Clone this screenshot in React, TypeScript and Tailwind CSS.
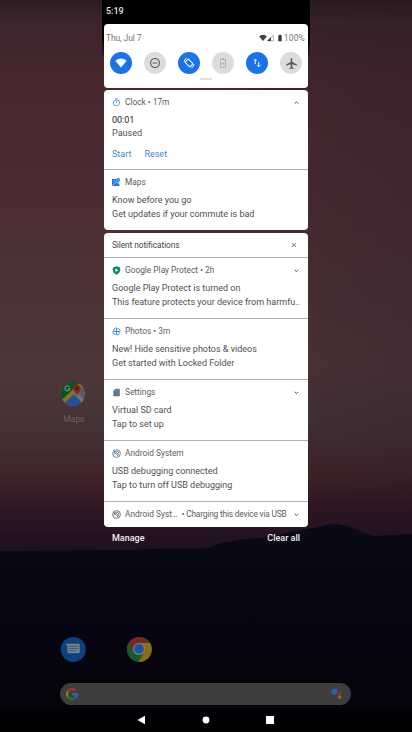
import type { ReactNode } from "react";
import {
  MdAirplanemodeActive,
  MdBatteryStd,
  MdClose,
  MdOutlineTimer,
  MdRemoveCircleOutline,
} from "react-icons/md";

function Wallpaper() {
  return (
    <svg className="absolute inset-0" width="412" height="732" viewBox="0 0 412 732">
      <defs>
        <linearGradient id="sky" x1="0" y1="0" x2="0" y2="1">
          <stop offset="0" stopColor="#2b1c20" />
          <stop offset="0.04" stopColor="#3b252b" />
          <stop offset="0.15" stopColor="#47282e" />
          <stop offset="0.45" stopColor="#4b3034" />
          <stop offset="0.66" stopColor="#4d3739" />
          <stop offset="0.78" stopColor="#443134" />
          <stop offset="0.85" stopColor="#402428" />
          <stop offset="0.91" stopColor="#2f1724" />
          <stop offset="1" stopColor="#1a0e23" />
        </linearGradient>
        <linearGradient id="dim" x1="0" y1="0" x2="1" y2="0">
          <stop offset="0.3" stopColor="#1a0e1c" stopOpacity="0" />
          <stop offset="1" stopColor="#1a0e1c" stopOpacity="0.22" />
        </linearGradient>
        <linearGradient id="land" x1="0" y1="0" x2="0" y2="1">
          <stop offset="0" stopColor="#0a0918" />
          <stop offset="0.45" stopColor="#060513" />
          <stop offset="1" stopColor="#050409" />
        </linearGradient>
      </defs>
      <rect width="412" height="560" fill="url(#sky)" />
      <rect width="412" height="560" fill="url(#dim)" />
      <path
        d="M0 551 L130 550 L165 548.5 L205 548.5 L222 543 L245 539 L270 537 L295 531 L318 527 L328 524.5 L336 524 L346 525.5 L362 532 L374 536 L392 535 L412 534 V732 H0Z"
        fill="url(#land)"
      />
      <rect y="708" width="412" height="24" fill="#020104" />
    </svg>
  );
}

function MapsApp() {
  return (
    <svg width="26" height="26" viewBox="0 0 26 26">
      <defs>
        <clipPath id="disc">
          <circle cx="13" cy="13.5" r="12.5" />
        </clipPath>
      </defs>
      <g clipPath="url(#disc)">
        <rect width="26" height="26" fill="#5c5c5c" />
        <path d="M0 0H22L0 22Z" fill="#0d4f28" />
        <path d="M22 0L26 3L3 24L0 21Z" fill="#8a731c" />
        <path d="M13 13L26 26V21L17 12Z" fill="#757575" />
        <path d="M13.5 14L26 26H1Z" fill="#28509a" />
        <path d="M17 16C16.6 12 13.2 11 13.2 7.8A3.8 3.8 0 0 1 20.8 7.8C20.8 11 17.4 12 17 16Z" fill="#84241c" />
        <circle cx="17" cy="7.8" r="1.4" fill="#3d0f0e" />
        <path d="M9.3 6A2.6 2.6 0 1 0 9.8 8H7.5" fill="none" stroke="#8a8a8a" strokeWidth="1.1" />
      </g>
    </svg>
  );
}

function MessagesApp() {
  return (
    <svg width="26" height="26" viewBox="0 0 26 26">
      <circle cx="13.3" cy="13.4" r="12.5" fill="#0d427f" />
      <path d="M5.5 7.7H18.7Q19.7 7.7 19.7 8.7V16.3Q19.7 17.3 18.7 17.3H8.5Q7.5 17.3 7.5 16.3V10Z" fill="#7a8087" />
      <path d="M9 10.3H17.9M9 12.5H17.9M9 14.7H16" stroke="#1f4f8a" strokeWidth="0.8" />
    </svg>
  );
}

function ChromeApp() {
  return (
    <svg width="26" height="26" viewBox="0 0 26 26">
      <defs>
        <clipPath id="chromeDisc">
          <circle cx="13.3" cy="13.4" r="12.5" />
        </clipPath>
      </defs>
      <g clipPath="url(#chromeDisc)">
        <rect width="26" height="26" fill="#175a2c" />
        <path d="M13 6.8H26V26H12.6L18.4 15.8Z" fill="#8a6e10" />
        <path d="M0 0H26V6.8H13L7.6 15.8L2 6.4Z" fill="#7a261f" />
      </g>
      <circle cx="13" cy="12.9" r="6" fill="#808080" />
      <circle cx="13" cy="12.9" r="4.9" fill="#1c53a3" />
    </svg>
  );
}

function GoogleG() {
  return (
    <svg width="12" height="12" viewBox="0 0 12 12" fill="none" strokeWidth="2.3">
      <path d="M9.5 2.4A4.9 4.9 0 0 0 1.8 3.5" stroke="#9a352c" />
      <path d="M1.8 3.4A4.9 4.9 0 0 0 1.8 8.6" stroke="#957718" />
      <path d="M1.8 8.6A4.9 4.9 0 0 0 9.1 9.8" stroke="#267539" />
      <path d="M9.1 9.8Q10.8 8.4 10.8 6.2H6" stroke="#2d61b0" />
    </svg>
  );
}

function AssistantMark() {
  return (
    <svg width="12" height="12" viewBox="0 0 12 12">
      <circle cx="3.6" cy="3.6" r="3.1" fill="#295db3" />
      <circle cx="8.6" cy="5.2" r="1.7" fill="#963328" />
      <circle cx="8.6" cy="9" r="1.8" fill="#967511" />
      <circle cx="11" cy="3.3" r="0.8" fill="#267539" />
    </svg>
  );
}

function HomeScreen() {
  return (
    <div className="absolute inset-0 flex flex-col">
      <div className="mt-[381px] ml-[43px] flex h-[44px] w-[60px] flex-col items-center">
        <MapsApp />
        <span className="mt-[7px] ml-[2px] text-[8.4px] leading-[12px] text-[#6b6263]">Maps</span>
      </div>
      <div className="mt-[211px] ml-[60px] flex gap-10">
        <MessagesApp />
        <ChromeApp />
      </div>
      <div className="mt-[21px] ml-[60px] flex h-[22px] w-[291px] items-center justify-between rounded-full bg-[#3e3e3e] pl-[6px] pr-[8px]">
        <GoogleG />
        <AssistantMark />
      </div>
    </div>
  );
}

function Tile({ on, children }: { on?: boolean; children: ReactNode }) {
  return (
    <div
      className={
        "flex size-[22px] items-center justify-center rounded-full " +
        (on ? "bg-[#1a73e8] text-white" : "bg-[#dcdcdc] text-[#5a5a5a]")
      }
    >
      {children}
    </div>
  );
}

function QuickSettings() {
  return (
    <div className="mx-[2px] flex h-16 flex-col rounded-[4px] bg-white">
      <div className="flex h-[28px] items-center pl-[2px] pr-[3px] text-[8.5px] text-[#757575]">
        <span className="flex-1 leading-[12px] tracking-[-0.12px]">Thu, Jul 7</span>
        <svg width="8" height="8" viewBox="0 0 8 8">
          <path d="M0 2.2Q4 -0.8 8 2.2L4 7Z" fill="#404040" />
        </svg>
        <svg width="7" height="8" viewBox="0 0 7 8">
          <path d="M0.8 6.8L6.4 1V6.8Z" fill="none" stroke="#8a8a8a" strokeWidth="0.6" />
          <path d="M0 7.1L4 3V7.1Z" fill="#404040" />
        </svg>
        <MdBatteryStd className="ml-[2px] size-[8px] text-[#333]" />
        <span className="leading-[12px] tracking-[0.15px]">100%</span>
      </div>
      <div className="flex justify-between px-[6px]">
        <Tile on>
          <svg width="12" height="12" viewBox="0 0 12 12">
            <path d="M0.3 3.8Q6 -0.6 11.7 3.8L6 10.6Z" fill="currentColor" />
          </svg>
        </Tile>
        <Tile>
          <MdRemoveCircleOutline className="size-[12px]" />
        </Tile>
        <Tile on>
          <svg width="12" height="12" viewBox="0 0 12 12" fill="none" stroke="currentColor" strokeWidth="1">
            <rect x="3.7" y="2.6" width="4.6" height="6.8" rx="0.6" transform="rotate(-45 6 6)" />
            <path d="M1.1 4.8Q1.2 2.2 3.6 1.2M10.9 7.2Q10.8 9.8 8.4 10.8" />
          </svg>
        </Tile>
        <Tile>
          <svg width="12" height="12" viewBox="0 0 12 12" fill="none" stroke="#b3b3b3" strokeWidth="1">
            <path d="M3.5 2.5H8.5V10.5H3.5ZM5 1.5H7M6 5V8M4.6 6.5H7.4" />
          </svg>
        </Tile>
        <Tile on>
          <svg width="12" height="12" viewBox="0 0 12 12" fill="none" stroke="currentColor" strokeWidth="1">
            <path d="M4.3 7V2.3M2.8 3.7L4.3 2.2L5.8 3.7M7.7 5V9.7M6.2 8.3L7.7 9.8L9.2 8.3" />
          </svg>
        </Tile>
        <Tile>
          <MdAirplanemodeActive className="size-[13px]" />
        </Tile>
      </div>
      <div className="mx-auto mt-[4px] h-[2px] w-[12px] bg-[#e0e0e0]" />
    </div>
  );
}

function Chevron({ up }: { up?: boolean }) {
  return (
    <svg className="mr-[1px] shrink-0" width="5" height="5" viewBox="0 0 5 5" fill="none" stroke="#3c3c3c" strokeWidth="0.9">
      <path d={up ? "M0.7 3.6L2.5 1.8L4.3 3.6" : "M0.7 1.8L2.5 3.6L4.3 1.8"} />
    </svg>
  );
}

function Header({
  icon,
  label,
  chevron,
}: {
  icon: ReactNode;
  label: ReactNode;
  chevron?: "up" | "down";
}) {
  return (
    <div className="flex h-4 items-center">
      <span className="flex w-[13px] shrink-0 items-center">{icon}</span>
      <span className="flex-1 whitespace-pre pt-px text-[8.33px] leading-[15px] text-[#5c5c5c]">{label}</span>
      {chevron && <Chevron up={chevron === "up"} />}
    </div>
  );
}

function Notification({
  icon,
  app,
  title,
  body,
  chevron,
}: {
  icon: ReactNode;
  app: string;
  title: string;
  body: string;
  chevron?: "up" | "down";
}) {
  return (
    <div className="h-[60px] px-2 pt-1">
      <Header icon={icon} label={app} chevron={chevron} />
      <p className="mt-[3px] whitespace-nowrap text-[9px] leading-[14px] text-[#505050]">{title}</p>
      <p className="whitespace-nowrap text-[9px] leading-[14px] text-[#505050]">{body}</p>
    </div>
  );
}

function MapsGlyph() {
  return (
    <svg width="8" height="8" viewBox="0 0 8 8">
      <path d="M0 1H4.5V3.5L7.5 6V8H0Z" fill="#1a73e8" />
      <circle cx="6.2" cy="1.9" r="1.8" fill="#1a73e8" />
      <path d="M6.2 5L4.8 2.8H7.6Z" fill="#1a73e8" />
      <path d="M0.3 7.5L4.5 3.8L7.5 6.8M1.3 3H3" fill="none" stroke="#d5e5fb" strokeWidth="0.7" />
      <circle cx="6.2" cy="1.9" r="0.6" fill="#fff" />
    </svg>
  );
}

function ShieldGlyph() {
  return (
    <svg width="9" height="9" viewBox="0 0 9 9">
      <path d="M4.5 0.2L8.2 1.4V4.3Q8.1 7.2 4.5 8.8Q0.9 7.2 0.8 4.3V1.4Z" fill="#0b8f62" />
      <path d="M3.4 2.6L6.3 4.3L3.4 6Z" fill="#fff" />
    </svg>
  );
}

function PhotosGlyph() {
  return (
    <svg width="9" height="9" viewBox="0 0 9 9" fill="none" stroke="#3b82e8" strokeWidth="0.9">
      <path d="M4.5 4.5V1.1A1.7 1.7 0 0 0 2.8 4.5ZM4.5 4.5H7.9A1.7 1.7 0 0 0 4.5 2.8ZM4.5 4.5V7.9A1.7 1.7 0 0 0 6.2 4.5ZM4.5 4.5H1.1A1.7 1.7 0 0 0 4.5 6.2Z" />
    </svg>
  );
}

function SdGlyph() {
  return (
    <svg width="9" height="9" viewBox="0 0 9 9">
      <path d="M3.5 0.7H7.2Q7.8 0.7 7.8 1.3V7.7Q7.8 8.3 7.2 8.3H1.9Q1.3 8.3 1.3 7.7V2.9Z" fill="#5a7b88" />
      <path d="M3.6 1.6V3M5 1.6V3M6.4 1.6V3" stroke="#93a9b2" strokeWidth="0.5" />
    </svg>
  );
}

function SystemGlyph({ color }: { color: string }) {
  return (
    <svg width="9" height="9" viewBox="0 0 9 9" fill="none" stroke={color}>
      <circle cx="4.5" cy="4.5" r="3.9" strokeWidth="0.8" />
      <path d="M2 5.3Q1.9 2.3 4.8 2.1Q6.8 2.3 7 4.3M3.2 5.2Q3.3 3.5 4.8 3.6L7.2 6.5M4.4 4.8L6 7.3M2.2 2.2L3 3" strokeWidth="0.8" />
    </svg>
  );
}

function Divider() {
  return <div className="h-px bg-[#b0b0b0]" />;
}

function Shade() {
  return (
    <div className="absolute left-[102px] top-0 flex w-[208px] flex-col">
      <div className="absolute inset-x-0 top-0 h-[60px] bg-linear-to-b from-black from-60% to-transparent" />
      <div className="relative flex h-6 items-center bg-black pl-[4px] text-[9px] font-medium text-[#e4e4e4]">
        5:19
      </div>
      <div className="relative">
        <QuickSettings />
      </div>

      <div className="mx-[2px] mt-[2px] overflow-hidden rounded-[4px] bg-white">
        <div className="h-[79px] px-2 pt-1">
          <Header
            icon={<MdOutlineTimer className="size-[9px] text-[#3b87e0]" />}
            label="Clock • 17m"
            chevron="up"
          />
          <p className="mt-[3px] text-[9px] leading-[14px] text-[#222]">00:01</p>
          <p className="-mt-px text-[9px] leading-[14px] text-[#505050]">Paused</p>
          <div className="mt-[7px] flex gap-[13px] text-[9px] leading-[14px] text-[#3f88d4]">
            <span>Start</span>
            <span>Reset</span>
          </div>
        </div>
        <Divider />
        <Notification
          icon={<MapsGlyph />}
          app="Maps"
          title="Know before you go"
          body="Get updates if your commute is bad"
        />
      </div>

      <div className="mx-[2px] mt-[3px] overflow-hidden rounded-[4px] bg-white">
        <div className="flex h-6 items-center justify-between pl-2 pr-[10px] text-[8.33px] text-[#444]">
          <span className="pt-px tracking-[-0.08px]">Silent notifications</span>
          <MdClose className="size-[8px] text-[#666]" />
        </div>
        <Divider />
        <Notification
          icon={<ShieldGlyph />}
          app="Google Play Protect • 2h"
          title="Google Play Protect is turned on"
          body="This feature protects your device from harmfu.."
          chevron="down"
        />
        <Divider />
        <Notification
          icon={<PhotosGlyph />}
          app="Photos • 3m"
          title="New! Hide sensitive photos & videos"
          body="Get started with Locked Folder"
        />
        <Divider />
        <Notification
          icon={<SdGlyph />}
          app="Settings"
          title="Virtual SD card"
          body="Tap to set up"
          chevron="down"
        />
        <Divider />
        <Notification
          icon={<SystemGlyph color="#4f7180" />}
          app="Android System"
          title="USB debugging connected"
          body="Tap to turn off USB debugging"
        />
        <Divider />
        <div className="h-[25px] px-2 pt-1">
          <Header
            icon={<SystemGlyph color="#5c5c5c" />}
            label={
              <>
                Android Syst…{"  "}
                <span className="tracking-[-0.17px]">• Charging this device via USB</span>
              </>
            }
            chevron="down"
          />
        </div>
      </div>

      <div className="mx-[10px] mt-[4px] flex justify-between text-[9px] font-medium leading-[14px] text-[#f0f0f0]">
        <span>Manage</span>
        <span>Clear all</span>
      </div>
    </div>
  );
}

function NavBar() {
  return (
    <svg className="absolute bottom-0 left-0" width="412" height="24" viewBox="0 0 412 24" fill="#fff">
      <path d="M137.5 12L145 7.8V16.2Z" />
      <circle cx="206" cy="12" r="3.4" />
      <rect x="266" y="8" width="8" height="8" rx="0.5" />
    </svg>
  );
}

export default function App() {
  return (
    <div className="relative h-[732px] w-[412px] overflow-hidden bg-black font-['Roboto',sans-serif]">
      <Wallpaper />
      <HomeScreen />
      <Shade />
      <NavBar />
    </div>
  );
}
